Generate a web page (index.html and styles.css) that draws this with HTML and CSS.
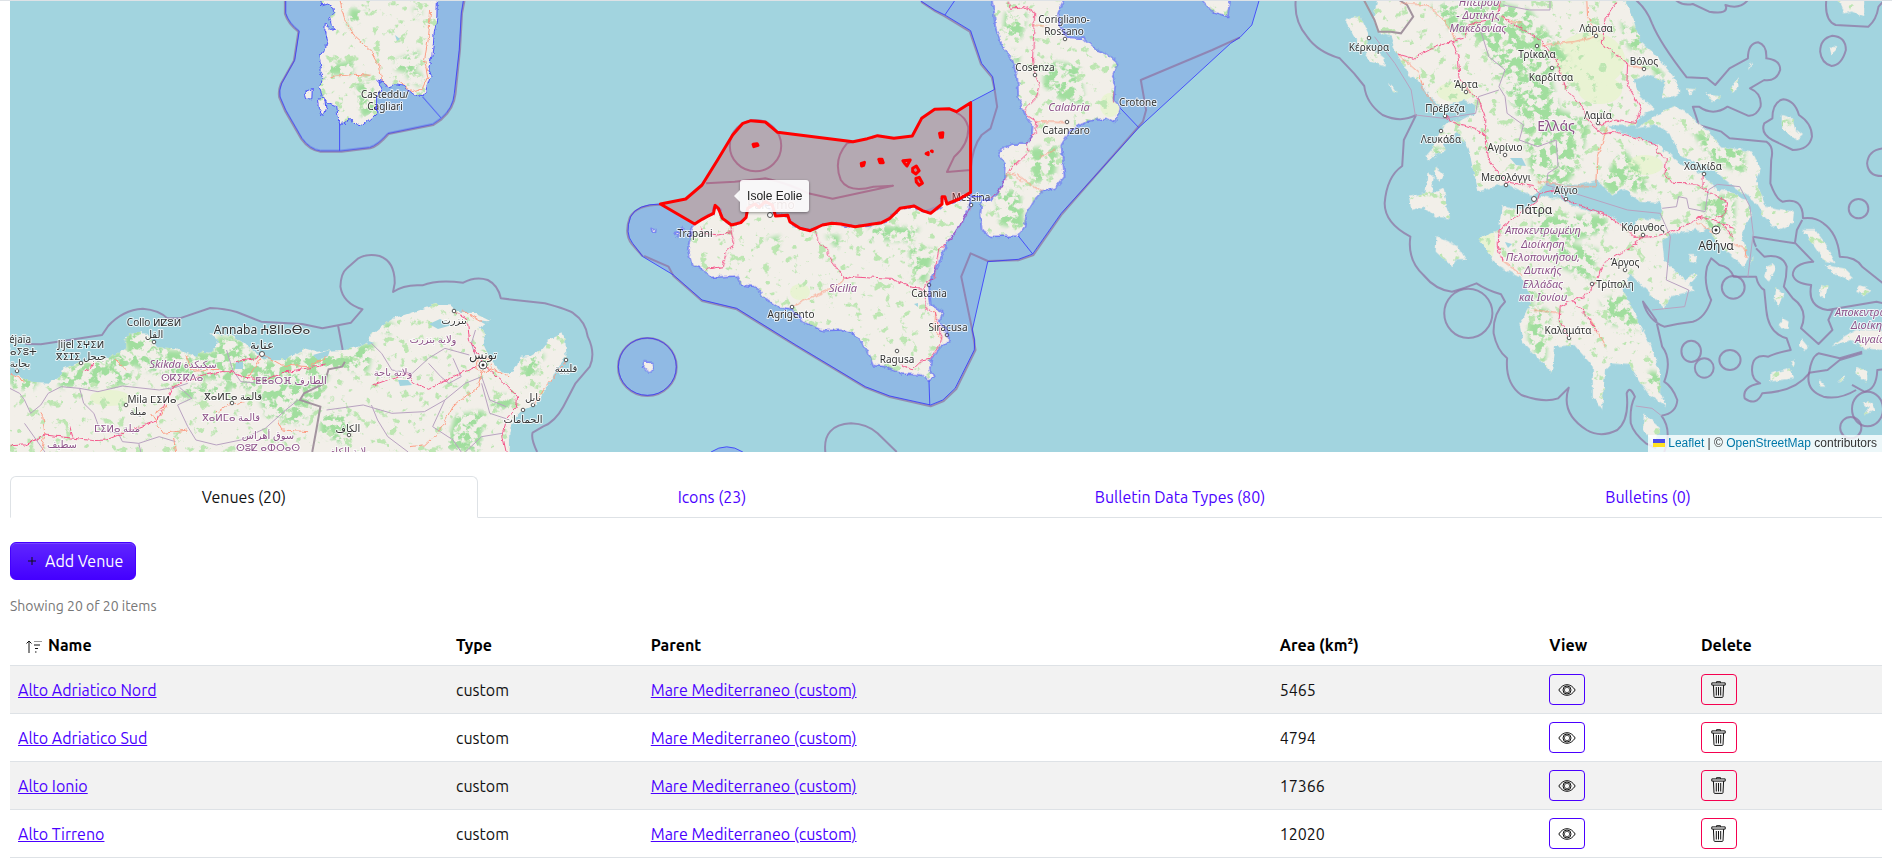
FILE: index.html
```html
<!DOCTYPE html>
<html lang="en">
<head>
<meta charset="utf-8">
<meta name="viewport" content="width=device-width, initial-scale=1">
<title>Venues</title>
<link rel="stylesheet" href="styles.css">
</head>
<body>
<svg class="sprite" aria-hidden="true">
  <symbol id="i-eye" viewBox="0 0 18 12"><path d="M.8 6C3 2.600 5.800.7 9 .7S15 2.600 17.200 6C15 9.400 12.200 11.300 9 11.300S3 9.400.8 6z"/><circle cx="9" cy="6" r="4"/><circle cx="9" cy="6" r="2.700" stroke-width=".7"/></symbol>
  <symbol id="i-trash" viewBox="0 0 15 17"><path d="M5.500 1.800V.7h4v1.100M.8 1.900h13.400v2.200H.8zM2.400 4.100l.6 11.600q.1.700.8.700h7.400q.7 0 .8-.7l.6-11.600M5.300 6v8.500M7.500 6v8.500M9.700 6v8.500"/></symbol>
  <symbol id="i-sort" viewBox="0 0 16 13"><path d="M3 13V1M.5 3.500L3 1l2.500 2.500"/><path class="faint" d="M8 1.500h8"/><path d="M8 5h6M9 8.500h3M9 12h1.500"/></symbol>
</svg>

<main class="page">
  <section class="map" aria-label="Map">
    <svg class="map-canvas" viewBox="10 1 1872 451" preserveAspectRatio="xMidYMid slice">
      <defs>
        <filter id="rough" filterUnits="userSpaceOnUse" x="0" y="0" width="1892" height="460" color-interpolation-filters="sRGB">
          <feTurbulence type="fractalNoise" baseFrequency=".16" numOctaves="3" seed="4" result="n"/>
          <feDisplacementMap in="SourceGraphic" in2="n" scale="5" xChannelSelector="R" yChannelSelector="G"/>
        </filter>
        <filter id="woods" filterUnits="userSpaceOnUse" x="0" y="0" width="1892" height="460" color-interpolation-filters="sRGB">
          <feTurbulence type="fractalNoise" baseFrequency=".12" numOctaves="4" seed="11"/>
          <feColorMatrix values="0 0 0 0 .63  0 0 0 0 .87  0 0 0 0 .62  9 0 0 0 -4.200" result="g"/>
          <feGaussianBlur in="SourceGraphic" stdDeviation="2" result="s"/>
          <feComposite in="g" in2="s" operator="in"/>
        </filter>
        <filter id="scrub" filterUnits="userSpaceOnUse" x="0" y="0" width="1892" height="460" color-interpolation-filters="sRGB">
          <feTurbulence type="fractalNoise" baseFrequency=".11" numOctaves="4" seed="23"/>
          <feColorMatrix values="0 0 0 0 .74  0 0 0 0 .90  0 0 0 0 .70  0 10 0 0 -6.200" result="g"/>
          <feComposite in="g" in2="SourceGraphic" operator="in"/>
        </filter>

        <g id="italy">
          <g transform="scale(.40816 .33333)">
            <path class="k" d="M784 -20L788 18 803 12 818 22 820 38 808 52 812 75 822 86 808 88 797 66 796 90 802 120 798 145 784 170 788 195 781 210 793 235 782 262 790 290 805 310 825 320 828 350 836 375 848 365 858 355 870 370 888 376 905 358 925 335 925 290 935 265 925 240 940 245 950 262 965 254 990 258 1010 280 1020 288 1040 290 1046 260 1056 225 1050 205 1058 170 1062 130 1064 95 1070 60 1072 -20ZM747 275L765 266 764 296 752 298ZM778 298L796 294 798 322 792 346 780 325Z"/>
          </g>
          <g transform="translate(600 0) scale(.40816 .33333)">
            <path class="k" d="M957 -20L965 30 968 80 985 140 1008 175 1022 230 1025 290 1042 345 1060 375 1058 410 1045 432 1010 432 975 455 978 468 992 490 990 540 972 585 955 600 935 600 932 640 935 690 957 709 1025 708 1040 680 1045 640 1065 600 1085 575 1115 565 1138 530 1130 435 1150 395 1190 365 1240 355 1258 368 1272 345 1275 320 1258 300 1262 255 1256 230 1268 190 1240 160 1215 150 1185 115 1145 112 1125 70 1122 40 1145 -20ZM1460 -20L1500 35 1538 50 1546 -20Z"/>
            <path class="k" d="M232 672L250 658 262 650 278 640 282 616 292 630 300 655 322 675 345 668 358 650 360 625 385 610 410 620 430 640 460 648 465 668 490 685 515 692 545 675 575 670 625 680 690 670 710 655 735 625 770 618 790 635 810 640 835 620 838 590 850 610 880 600 910 580 905 620 890 660 850 730 830 790 812 830 806 860 810 915 840 935 832 965 850 1000 858 1022 835 1040 812 1075 808 1105 818 1135 805 1142 790 1125 740 1122 700 1100 670 1097 655 1050 625 1005 590 990 545 992 505 970 470 930 440 925 400 890 380 860 345 855 335 828 270 832 250 805 225 795 215 750 222 700ZM108 1085L128 1088 130 1110 118 1116 106 1100ZM126 686L136 686 136 700 128 698ZM180 702L192 698 190 712ZM195 682L204 680 204 690Z"/>
          </g>
        </g>
        <g id="abroad">
          <g transform="scale(.40816 .33333)">
            <path d="M-10 1118L42 1128 75 1145 120 1148 150 1125 155 1105 190 1088 230 1080 260 1072 285 1062 310 1045 305 1020 320 1002 345 997 358 998 372 1020 385 1042 430 1045 455 1058 480 1068 495 1055 515 1058 530 1040 535 1020 515 1000 560 1005 590 1020 620 1055 650 1078 700 1078 745 1045 775 1055 800 1052 840 1050 895 1030 910 1005 940 975 965 955 990 945 1040 925 1070 912 1100 912 1112 925 1130 940 1160 938 1200 962 1175 980 1188 1000 1185 1035 1200 1075 1230 1118 1255 1115 1270 1095 1275 1070 1300 1068 1325 1050 1345 1020 1378 1000 1385 1025 1388 1070 1360 1110 1340 1165 1310 1215 1280 1230 1255 1260 1248 1300 1245 1390 -10 1390Z"/>
          </g>
          <g transform="translate(1252 0) scale(.40816 .33333)">
            <path d="M310 -20L298 50 310 95 340 110 350 150 385 225 415 250 435 290 470 320 490 310 520 300 548 315 545 345 500 360 475 365 455 410 435 470 500 395 530 440 540 500 555 575 620 550 690 590 705 568 720 550 800 555 845 540 880 585 910 565 950 605 1000 610 1005 630 1000 660 950 655 930 685 860 640 790 620 765 600 715 590 700 600 660 630 612 618 605 690 555 715 600 795 660 835 685 890 680 925 655 970 665 1030 690 1060 735 1120 740 1040 790 1035 835 1100 835 1190 858 1230 865 1110 880 1090 925 1095 970 1180 1015 1218 1000 1180 1000 1120 975 1030 945 960 910 870 925 820 1010 925 1025 890 1085 870 1050 830 1010 780 1005 720 1030 700 1080 690 1110 680 1150 740 1205 800 1215 770 1200 700 1225 640 1210 600 1170 575 1140 570 1100 520 1050 490 1000 440 960 420 890 390 870 375 940 378 950 350 985 325 950 290 935 240 970 225 1010 245 1005 295 1030 290 1050 275 1030 225 985 160 950 120 935 60 905 -20Z"/>
            <path d="M940 385L1000 340 1035 318 1060 335 1110 385 1150 440 1225 455 1245 500 1235 545 1260 620 1328 635 1325 670 1290 690 1255 650 1230 600 1180 560 1120 500 1050 470 1025 400 990 375Z"/>
            <path d="M228 60L265 48 285 100 280 130 325 175 325 200 290 185 250 110ZM430 520L445 530 440 580 470 565 485 655 450 650 420 620 390 630 385 590 425 580ZM452 708L505 740 525 780 500 780 490 800 450 755ZM425 470L460 420 475 450 430 480ZM335 245L345 260 355 278 345 272ZM450 500L470 520 460 545 448 530ZM960 1240L1000 1285 985 1330 958 1290ZM1080 820L1090 830 1070 855 1055 845ZM1072 765L1090 765 1088 790 1072 785ZM1090 675L1118 680 1105 695 1090 692Z"/>
            <path d="M1430 -20L1450 40 1470 35 1500 52 1500 -20ZM1415 140L1432 142 1420 165ZM1298 345L1325 355 1330 385 1350 405 1335 420 1310 400 1298 375ZM1065 265L1085 268 1075 285ZM1110 275L1125 285 1150 290 1130 308ZM1170 270L1190 232 1192 260 1180 280ZM1215 210L1222 185 1225 195ZM1350 690L1380 690 1405 730 1430 790 1400 780ZM1405 795L1450 805 1475 835 1460 842 1425 820ZM1260 800L1280 792 1285 805 1265 845 1255 830ZM1285 865L1302 880 1290 920 1280 900ZM1300 955L1315 965 1312 985 1290 980ZM1345 1015L1362 1040 1352 1055 1342 1035ZM1395 855L1410 860 1405 895 1390 885ZM1490 855L1520 870 1500 885 1480 875ZM1270 1120L1320 1105 1325 1135 1270 1145ZM1320 1085L1330 1082 1328 1100ZM1480 1100L1505 1115 1505 1145 1482 1125ZM1435 1145L1455 1125 1450 1140ZM1390 1140L1408 1160 1395 1160ZM1495 1205L1520 1210 1525 1230 1500 1245 1512 1225ZM1420 1040L1450 1010 1480 990 1546 990 1546 1050 1500 1045 1470 1020 1440 1030ZM1220 795L1230 770 1228 780Z"/>
          </g>
        </g>
        <mask id="on-land" maskUnits="userSpaceOnUse" x="0" y="0" width="1892" height="460">
          <g fill="#fff" filter="url(#rough)"><use href="#italy"/><use href="#abroad"/></g>
        </mask>
      </defs>

      <rect class="sea" x="0" y="0" width="1892" height="460"/>

      <g class="zone">
        <path transform="scale(.40816 .33333)" d="M700 -20V40Q708 70 733 93L722 180 690 250Q683 270 686 290L700 330 740 415Q760 448 785 452L835 452 905 442Q925 435 950 400L1060 372 1080 355Q1110 325 1113 280L1125 150 1130 40 1138 -20Z"/>
        <g transform="translate(600 0) scale(.40816 .33333)">
          <path d="M760 -20L785 2 820 30 845 45 908 92 935 190 962 230 967 268 908 306 908 580 600 720 300 700 232 672 148 612Q90 612 75 650 60 700 80 730L105 770 180 825 250 900 335 925 480 1035 650 1160 710 1188 810 1215 840 1200 870 1165 917 1050 918 1020 912 990 950 785 1025 778 1060 762 1130 640 1320 383 1545 130 1568 112 1597 75 1620 -20Z"/>
          <ellipse cx="116" cy="1100" rx="71" ry="86"/>
          <path d="M272 1356Q310 1325 350 1356Z"/>
        </g>
      </g>

      <g class="border">
        <path transform="scale(.40816 .33333)" d="M62 1032L100 1033 250 1005 265 978Q300 930 350 926 390 930 410 955L440 955 515 924Q550 925 580 936L640 965 740 972 790 985 860 968 888 928Q840 910 834 860 835 820 850 805L878 775Q900 760 930 768 968 785 967 850L963 876Q990 852 1035 856 1070 838 1135 848 1165 828 1195 840 1220 855 1227 895L1335 910Q1395 930 1405 940 1435 965 1440 1010 1460 1060 1445 1100L1410 1150 1380 1220Q1360 1265 1330 1280L1305 1298Q1300 1315 1316 1356M828 975L845 1085M698 -10L698 42Q706 72 731 95L720 182 688 252Q681 272 684 292L698 332 738 417Q758 451 785 455L837 455 907 445Q927 438 952 402L1062 375 1082 358Q1112 327 1116 282L1127 150 1132 40 1140 -10"/>
        <g transform="translate(600 0) scale(.40816 .33333)">
          <path d="M787 6L822 34 845 49 906 95 933 192 960 232 967 270 973 320 957 385 935 405Q912 440 908 510L850 516 868 470Q905 430 902 380 895 350 873 338M260 550L330 545 405 535Q460 550 510 580L570 596 718 557 670 560Q610 580 590 540 570 480 605 430L625 425M108 768L168 800 180 828 250 903 335 928 480 1038 650 1163 710 1191 810 1219 842 1203 873 1167 920 1050 912 990 885 830 908 760 950 783 1025 781 1062 765 1132 642 1330 365 1338 330 1325 240 1500 150 1568 112"/>
          <ellipse cx="381" cy="437" rx="63" ry="77"/>
          <ellipse cx="116" cy="1101" rx="72" ry="87"/>
          <path d="M552 1356Q545 1275 615 1270 655 1272 680 1300L727 1356M148 614Q90 614 73 652 58 702 78 732L105 770"/>
        </g>
        <g transform="translate(1252 0) scale(.40816 .33333)">
          <path d="M108 -10Q100 60 135 110 160 155 215 175L250 220 275 258Q280 310 320 345 365 370 402 345L372 420 368 498Q330 530 325 610 325 670 388 710 380 780 420 825 450 870 490 875 520 865 550 850 575 870 610 883L620 905Q590 940 592 1000 600 1050 625 1075 620 1150 660 1185 715 1210 750 1195L776 1163Q755 1240 820 1290 855 1315 895 1290 925 1260 918 1180 925 1155 938 1190 925 1220 928 1270 935 1300 965 1330L990 1345M1003 1247Q1040 1240 1042 1200 1030 1160 1010 1145 1030 1080 1005 1040L990 960 958 905Q970 960 1010 980 1045 970 1080 965 1110 955 1125 900 1105 850 1115 800L1125 775 1145 795Q1170 800 1180 830L1235 830Q1240 860 1255 870L1260 930Q1265 1000 1310 1015L1320 1050Q1280 1060 1265 1070 1225 1060 1225 1110 1225 1140 1245 1150 1200 1160 1207 1195 1235 1220 1250 1180 1330 1175 1365 1120 1370 1070 1388 1060L1440 1075 1495 1055M1003 1247Q1030 1290 1010 1356"/>
          <path d="M930 -10Q965 20 980 70 1000 130 1065 232L1115 235 1135 255 1170 205 1215 175Q1215 130 1240 127 1262 135 1260 175 1295 180 1294 210 1285 245 1255 240L1220 265Q1250 280 1246 320 1235 350 1215 347L1165 320Q1130 350 1095 320L1080 320 1095 375 1150 395 1170 415 1260 425Q1280 440 1272 480L1270 550Q1285 600 1300 605 1350 590 1350 655 1380 650 1400 670 1435 700 1440 770 1480 770 1495 800L1546 850M1227 710L1330 730 1335 690 1348 660M1235 740Q1230 730 1227 710M1235 745L1255 770Q1300 760 1310 800 1310 830 1303 860L1325 895Q1365 930 1345 985L1388 1032 1422 990 1412 960 1425 925M1330 728L1375 785Q1325 790 1325 825 1330 850 1370 855 1360 920 1410 930L1530 905 1546 910M1480 1170Q1440 1200 1400 1190 1355 1170 1365 1118L1410 1110 1440 1080 1495 1060M1470 1155L1500 1175Q1530 1170 1532 1110L1546 1108"/>
          <path d="M1030 -10Q1050 20 1080 12L1120 35Q1170 45 1160 15 1195 30 1215 0M1408 -10Q1400 60 1430 75L1510 80Q1530 60 1535 20L1546 5"/>
          <path d="M1422 107Q1455 110 1455 150 1445 195 1420 198 1395 190 1392 155 1392 115 1422 107ZM1302 298Q1330 302 1340 345 1372 370 1372 410 1365 450 1325 450L1275 420Q1245 400 1255 370L1275 355Q1275 305 1302 298ZM1546 445Q1510 450 1507 490 1510 530 1546 528"/>
          <ellipse cx="530" cy="940" rx="59" ry="74"/><ellipse cx="1179" cy="862" rx="28" ry="34"/><ellipse cx="1076" cy="1054" rx="24" ry="32"/><ellipse cx="1108" cy="1104" rx="23" ry="29"/><ellipse cx="1171" cy="1080" rx="26" ry="30"/><ellipse cx="1486" cy="626" rx="24" ry="29"/><ellipse cx="1508" cy="1227" rx="38" ry="52"/><ellipse cx="1467" cy="1283" rx="26" ry="32"/>
        </g>
      </g>

      <g class="land" filter="url(#rough)"><use href="#italy"/><use href="#abroad"/></g>

      <g mask="url(#on-land)">
        <g class="field">
          <ellipse cx="1590" cy="60" rx="35" ry="28"/><ellipse cx="1600" cy="90" rx="22" ry="14"/><ellipse cx="1455" cy="92" rx="18" ry="10"/><ellipse cx="1645" cy="165" rx="18" ry="10"/><ellipse cx="1487" cy="242" rx="8" ry="20"/><ellipse cx="800" cy="292" rx="10" ry="8"/><ellipse cx="110" cy="398" rx="20" ry="8"/><ellipse cx="1110" cy="105" rx="10" ry="12"/>
        </g>
        <g filter="url(#scrub)"><rect width="1892" height="460"/></g>
        <g filter="url(#woods)">
          <path d="M123 332L150 332 165 350 215 352 218 336 240 340 262 362 330 350 375 342 368 372 330 370 322 400 290 402 255 392 215 380 150 372 130 365ZM55 372L125 350 135 385 60 388Z"/>
          <path d="M10 372L40 380 30 392 10 385ZM258 395L320 400 300 425 265 415ZM320 410L350 412 345 445 320 435ZM385 320L395 325 390 335 382 332ZM530 350L545 355 530 385 522 375ZM455 415L485 410 480 452 445 450ZM490 395L515 395 510 410 492 408ZM180 385L235 385 225 395 180 400Z"/>
          <path d="M325 65L355 60 352 75 328 75ZM355 85L372 80 378 112 362 118ZM350 8L365 10 355 30 348 25ZM395 60L420 50 415 75 395 70ZM412 8L422 8 420 20ZM405 75L422 72 420 88Z"/>
          <path d="M1005 12L1028 12 1022 38 1002 36ZM1045 60L1080 65 1085 105 1060 100 1043 85ZM1030 148L1060 145 1055 175 1035 185 1030 170ZM995 190L1020 190 1025 230 1000 225ZM1010 50L1020 52 1018 70ZM870 225L920 228 910 242 870 240ZM908 245L935 250 925 285 912 275ZM825 235L840 235 838 250ZM765 240L780 235 778 248Z"/>
          <path d="M1430 5L1500 0 1510 30 1545 55 1560 110 1590 120 1580 165 1555 200 1530 170 1520 120 1500 80 1480 40 1450 30ZM1490 0L1530 10 1570 60 1550 75 1510 60ZM1620 20L1640 30 1645 55 1628 48ZM1535 215L1605 215 1610 230 1560 245 1530 235ZM1700 195L1735 195 1735 230 1705 230ZM1690 128L1745 150 1745 175 1710 160ZM1600 300L1635 290 1640 330 1610 325ZM1530 305L1550 310 1545 370 1528 340ZM1560 240L1600 250 1590 280 1555 265ZM1650 60L1665 75 1660 90ZM1600 180L1625 150 1640 170 1650 190 1610 195ZM1650 370L1665 375 1660 395 1645 385ZM1510 290L1540 280 1530 310ZM1775 120L1790 120 1790 130 1778 130ZM1700 85L1740 80 1735 98 1705 98ZM1430 145L1445 150 1440 165Z"/>
        </g>
        <g class="lake">
          <path d="M429 324L440 319 452 325 438 329ZM236 362L243 362 243 369 235 369ZM1510 158L1522 158 1526 166 1516 165ZM1443 108L1460 104 1475 112 1458 122 1446 117ZM1630 58L1636 62 1632 66ZM1505 242L1512 244 1508 248ZM395 35L400 39 397 41ZM313 355L330 350 328 356 318 360ZM398 380L408 380 412 385 400 386ZM366 340L374 343 368 345ZM478 320L492 322 488 326ZM914 304L918 303 918 307Z"/>
        </g>
      </g>

      <g class="province">
        <g transform="scale(.40816 .33333)">
          <path d="M24 1165L48 1180 60 1200 75 1240 100 1215 118 1180 150 1160 195 1165 240 1175 300 1158 390 1170 430 1162 460 1150M195 1165L205 1210 230 1240 245 1290 290 1300 300 1325 340 1330 390 1310 430 1325M440 1162L470 1195 435 1215 460 1280 480 1320 530 1335 590 1320 650 1285 700 1230 730 1200M555 1050L570 1110 590 1145 640 1150M910 1030L935 1060 960 1110 1010 1120 1050 1075 1090 1045 1120 1055 1150 1065M1110 1075L1130 1130 1100 1150 1080 1130 1050 1090M1165 990L1155 1030 1165 1070M800 1230L890 1215 960 1240 1040 1235 1090 1200 1140 1150 1180 1130M910 1215L925 1260 950 1310 1000 1356M1180 1130L1200 1200 1240 1220M1090 1200L1060 1280 1110 1320 1130 1356M1140 1356L1180 1310 1230 1300M340 1330L345 1356M60 1270L110 1356M1180 1150L1200 1240 1250 1260"/>
          <path class="state" d="M845 1085L838 1100 805 1108 795 1150 745 1180 735 1200 785 1220 775 1290 765 1356"/>
        </g>
        <g transform="translate(1252 0) scale(.40816 .33333)">
          <path d="M560 90L580 170 620 210 605 260 620 290 625 340 665 375 655 420 700 440 745 420 750 500 725 520 722 555 790 580 920 630 1000 640M605 270L555 290 548 340 470 355 400 345 390 270 350 190 300 110M615 15L680 30 730 30V0M1005 625L1040 620 1045 590 1065 595 1070 625 1110 635 1118 570 1140 553 1195 560 1220 620 1228 700 1215 830M1000 640L1025 710 1015 840 1070 870 1060 920 980 930M940 1218L980 1225 1003 1247"/>
          <path class="state" d="M270 -10L300 60 310 95 340 95 365 100 395 50 380 15 360 0"/>
        </g>
      </g>

      <g class="road minor" filter="url(#rough)">
        <g transform="scale(.40816 .33333)">
          <path d="M833 0Q840 60 865 105L910 155 930 200 935 240 950 255M810 230L870 223 910 226M1055 30L1050 110 1040 180 1048 230 1035 265 1010 275 978 243M385 1262L370 1240 400 1300 460 1290M385 1262L410 1215 380 1240M110 1305L105 1250 100 1240M110 1305L100 1356M430 1356L425 1310M642 1062L610 1130M642 1062L690 1095 760 1100 800 1070M530 1240L560 1215 600 1205M1183 1110L1170 1160 1110 1220 1080 1290 1040 1335 1005 1340M1388 1085L1350 1140 1305 1218M1190 1100L1250 1130M1130 930L1180 965M455 1065L470 1110 540 1108M280 1075L310 1110M24 1120L60 1145M680 1265L690 1290 755 1295"/>
          <path d="M1170 1075L1195 1075 1205 1100 1190 1120 1165 1105Z"/>
        </g>
        <g transform="translate(600 0) scale(.40816 .33333)">
          <path d="M470 920L510 895 560 870 598 838M1060 75L1100 80M1020 520L1060 560 1085 575M1070 365L1140 368M1080 470L1115 450M820 930L818 980 838 1020M1258 275V305M1000 515L1035 545"/>
        </g>
        <g transform="translate(1252 0) scale(.40816 .33333)">
          <path d="M365 10L430 15 470 60 500 120M610 55L660 70M710 135L790 125 840 110M820 0L822 50 845 110M357 162L410 220 420 270 460 330M870 380L858 430 845 470 842 560 780 560 700 545M612 780L665 830M685 930L755 938M830 960L865 1040M1090 665L1130 700M1175 730L1212 750 1210 775M920 195L960 205"/>
        </g>
      </g>
      <g class="road" filter="url(#rough)">
        <g transform="scale(.40816 .33333)">
          <path d="M24 1337L60 1335 110 1305 230 1322 260 1320 290 1305 385 1262 400 1220 420 1165 440 1150 500 1125 560 1112 600 1135 650 1140 700 1115 750 1105 800 1095M170 1275L178 1310M205 1112L222 1105 228 1090M1112 935L1145 960 1150 1020 1183 1092 1235 1150 1268 1190 1265 1225 1240 1260 1232 1310 1240 1356M1183 1092L1100 1135 1050 1168 1010 1145 995 1120 960 1135 915 1155M575 1085L620 1078 642 1062"/>
        </g>
        <g transform="translate(600 0) scale(.40816 .33333)">
          <path d="M1000 5L1005 25 1040 20 1065 40 1060 180 1065 220 1078 260 1070 290 1042 325 1045 345 1070 365 1068 395 1045 430 1052 455 1000 515 975 580 955 595M245 680L255 700 290 705 322 695 330 735 310 755 300 800 262 808M322 695V672M525 692L540 735 558 745 560 770 575 795 598 838 625 828 710 835 740 850 765 862 795 865 800 925 820 940 838 1010 835 1030 810 1075 790 1080 765 1110 740 1095M795 865L800 845 818 835 830 750 850 730 880 680 908 620M515 692L545 675"/>
        </g>
        <g transform="translate(1252 0) scale(.40816 .33333)">
          <path d="M610 -10L600 55 560 65 530 75 520 115 490 125 450 140 395 175 357 162M610 50L680 100 710 125 745 180 770 270 810 320 815 350 858 402 890 395 985 430 995 460 1015 475 1012 520 1030 550 1090 552 1105 565 1140 590 1165 605 1160 640 1135 655M893 5L865 55 858 130 920 190 918 250 953 325 940 370 890 360 850 375M490 125L505 170 510 240 555 300 570 345 570 410 580 480 620 545 690 560 705 580 700 600 605 690 603 735 612 780M475 350L500 370 550 385 570 410M705 580L740 570 770 600 860 640 910 680 935 712 985 710 1040 690 1100 650 1150 670 1165 690 1180 715M958 712L930 740 860 790 845 840 815 890 785 900 755 920 752 960 775 1010M785 900L820 950 848 995M1105 525V560M1150 670L1180 685"/>
        </g>
      </g>

      <g class="town">
        <circle cx="154" cy="342" r="1.800"/><circle cx="81" cy="363" r="1.800"/><circle cx="17" cy="371" r="1.800"/><circle cx="262" cy="354" r="2.500"/><circle cx="126" cy="405" r="1.800"/><circle cx="232" cy="403" r="1.800"/><circle cx="454" cy="311" r="1.800"/><circle cx="566" cy="360" r="1.800"/><circle cx="533" cy="405" r="1.800"/><circle cx="523" cy="410" r="1.800"/><circle cx="349" cy="435" r="1.800"/><circle cx="483" cy="365" r="4"/><circle class="dot" cx="483" cy="365" r="1.500"/>
        <circle cx="1065" cy="39" r="1.800"/><circle cx="1035" cy="75" r="1.800"/><circle cx="1067" cy="122" r="1.800"/><circle cx="792" cy="307" r="1.800"/><circle cx="929" cy="285" r="1.800"/><circle cx="897" cy="351" r="1.800"/><circle cx="947" cy="335" r="1.800"/><circle cx="770" cy="215" r="2.500"/><circle cx="971" cy="205" r="1.800"/>
        <circle cx="1369" cy="38" r="1.800"/><circle cx="1596" cy="36" r="1.800"/><circle cx="1537" cy="46" r="1.800"/><circle cx="1552" cy="68" r="1.800"/><circle cx="1644" cy="69" r="1.800"/><circle cx="1466" cy="92" r="1.800"/><circle cx="1445" cy="116" r="1.800"/><circle cx="1598" cy="123" r="1.800"/><circle cx="1441" cy="131" r="1.800"/><circle cx="1505" cy="155" r="1.800"/><circle cx="1704" cy="174" r="1.800"/><circle cx="1506" cy="185" r="1.800"/><circle cx="1566" cy="199" r="1.800"/><circle cx="1534" cy="199" r="2.500"/><circle cx="1643" cy="235" r="1.800"/><circle cx="1625" cy="270" r="1.800"/><circle cx="1592" cy="284" r="1.800"/><circle cx="1569" cy="338" r="1.800"/><circle cx="1716" cy="230" r="4"/><circle class="dot" cx="1716" cy="230" r="1.500"/>
      </g>

      <g class="label">
        <text x="385" y="98">Casteddu/</text><text x="385" y="110">Cagliari</text>
        <text x="154" y="326">Collo ⵍⵇⵓⵍ</text><text x="154" y="338">القل</text>
        <text x="81" y="348">Jijel ⵉⵖⵉⵍ</text><text x="81" y="360">ⴳⵉⵊⵉ جيجل</text>
        <text x="20" y="343">éjaïa</text><text x="20" y="355">ⴳⴰⵢⵓⵜ</text><text x="20" y="367">بجاية</text>
        <text class="city" x="262" y="334">Annaba ⵄⵓⵏⵏⴰⴱⴰ</text><text class="city" x="262" y="349">عنابة</text>
        <text x="152" y="403">Mila ⵎⵉⵍⴰ</text><text x="138" y="415">ميلة</text>
        <text x="233" y="400">ⴳⴰⵍⵎⴰ قالمة</text>
        <text x="454" y="324">بنزرت</text><text class="city" x="483" y="359">تونس</text><text x="566" y="372">قليبية</text><text x="533" y="401">نابل</text><text x="523" y="423">الحمامات</text><text x="348" y="432">الكاف</text>
        <text x="1064" y="23">Corigliano-</text><text x="1064" y="35">Rossano</text><text x="1035" y="71">Cosenza</text><text x="1138" y="106">Crotone</text><text x="1066" y="134">Catanzaro</text><text x="971" y="201">Messina</text><text x="695" y="237">Trapani</text><text x="929" y="297">Catania</text><text x="791" y="318">Agrigento</text><text x="948" y="331">Siracusa</text><text x="897" y="363">Ragusa</text><text class="city" x="771" y="209">Palermo</text>
        <text x="1369" y="51">Κέρκυρα</text><text x="1596" y="32">Λάρισα</text><text x="1537" y="58">Τρίκαλα</text><text x="1551" y="81">Καρδίτσα</text><text x="1644" y="65">Βόλος</text><text x="1466" y="88">Άρτα</text><text x="1445" y="112">Πρέβεζα</text><text x="1598" y="119">Λαμία</text><text x="1441" y="143">Λευκάδα</text><text x="1505" y="151">Αγρίνιο</text><text x="1703" y="170">Χαλκίδα</text><text x="1506" y="181">Μεσολόγγι</text><text x="1566" y="194">Αίγιο</text><text class="city" x="1534" y="214">Πάτρα</text><text x="1643" y="231">Κόρινθος</text><text class="city" x="1716" y="250">Αθήνα</text><text x="1625" y="266">Άργος</text><text x="1615" y="288">Τρίπολη</text><text x="1568" y="334">Καλαμάτα</text>
      </g>
      <g class="label region">
        <text x="183" y="368"><tspan class="slant">Skikda</tspan> سكيكدة</text><text x="182" y="381">ⵙⴽⵉⴽⴷⴰ</text><text x="291" y="384">ⵟⵟⴰⵔⴼ الطارف</text><text x="231" y="421">ⴳⴰⵍⵎⴰ قالمة</text><text x="268" y="439">سوق أهراس</text><text x="268" y="451">ⵙⵓⵇ ⴰⵀⵔⴰⵙ</text><text x="117" y="432">ⵎⵉⵍⴰ ميلة</text><text x="62" y="448">سطيف</text><text x="433" y="343">ولاية بنزرت</text><text x="393" y="376">ولاية باجة</text><text x="348" y="455">ولاية الكاف</text>
        <text class="country" x="1556" y="131">Ελλάς</text>
        <g class="slant">
          <text x="1069" y="111">Calabria</text><text x="843" y="292">Sicilia</text>
          <text x="1479" y="6">Ηπείρου</text><text x="1478" y="19">- Δυτικής</text><text x="1478" y="32">Μακεδονίας</text>
          <text x="1543" y="234">Αποκεντρωμένη</text><text x="1543" y="248">Διοίκηση</text><text x="1543" y="261">Πελοποννήσου,</text><text x="1543" y="274">Δυτικής</text><text x="1543" y="288">Ελλάδας</text><text x="1543" y="301">και Ιονίου</text>
          <g class="cut"><text x="1835" y="316">Αποκεντρω</text><text x="1851" y="329">Διοίκη</text><text x="1855" y="343">Αιγαίο</text></g>
        </g>
      </g>

      <g class="coast" filter="url(#rough)"><use href="#italy"/></g>
      <g class="coast">
        <path transform="scale(.40816 .33333)" d="M700 -20V40Q708 70 733 93L722 180 690 250Q683 270 686 290L700 330 740 415Q760 448 785 452L835 452 905 442Q925 435 950 400L1060 372 1080 355Q1110 325 1113 280L1125 150 1130 40 1138 -20M832 372V452M1035 290L1080 353M922 240L930 250 936 244"/>
        <g transform="translate(600 0) scale(.40816 .33333)">
          <path d="M760 -20L785 2 820 30 845 45 908 92 935 190 962 230 967 268 908 306M870 0L845 45M148 612Q90 612 75 650 60 700 80 730L105 770 180 825 250 900 335 925 480 1035 650 1160 710 1188 810 1215 840 1200 870 1165 917 1050 918 1020 912 990 950 785 1025 778 1060 762 1130 640 1320 383 1545 130 1568 112 1597 75 1620 -20M806 1142L808 1215M1275 325L1320 383M1025 708L1060 762M910 590H935"/>
          <ellipse cx="116" cy="1100" rx="71" ry="86"/>
          <path d="M272 1356Q310 1325 350 1356"/>
        </g>
      </g>

      <g class="selected" transform="translate(600 0) scale(.40816 .33333)">
        <path d="M148 612L210 597 250 555 288 480 325 405 350 370 370 362 405 366 435 397 620 425 655 416 680 407 720 415 765 408 788 355 820 328 855 326 873 335 908 308 908 577 880 597 850 612 845 590 838 590 838 612 810 640 790 632 770 618 735 625 710 655 690 668 625 680 590 672 568 670 545 675 515 692 490 685 465 665 460 646 430 648 422 615 405 605 390 622 380 612 362 625 358 652 345 668 322 675 300 655 290 625 282 616 278 640 262 650 250 658 232 672Z"/>
        <path d="M742 482L760 480 752 498 746 490ZM766 505L775 498 782 512 774 522 766 515ZM774 535L782 532 790 550 782 556 775 546Z"/>
        <path class="isle" d="M375 433L385 431 387 436 377 440ZM640 490L648 487 646 496 641 498ZM683 478L691 478 694 488 686 488ZM832 400L840 398 839 412 834 412ZM799 461L804 458 804 464ZM812 453L814 453 814 455Z"/>
      </g>
    </svg>
    <div class="tooltip" role="tooltip">Isole Eolie</div>
    <div class="attribution">
      <a href="#leaflet"><svg class="flag" viewBox="0 0 12 8" aria-hidden="true"><path fill="#4c4ce8" d="M0 0h12v4H0z"/><path fill="#ffe21f" d="M0 4h12v4H0z"/></svg> Leaflet</a> | © <a href="#osm">OpenStreetMap</a> contributors
    </div>
  </section>

  <nav class="tabs" role="tablist">
    <button class="tab active" type="button" role="tab" aria-selected="true">Venues (20)</button>
    <button class="tab" type="button" role="tab" aria-selected="false">Icons (23)</button>
    <button class="tab" type="button" role="tab" aria-selected="false">Bulletin Data Types (80)</button>
    <button class="tab" type="button" role="tab" aria-selected="false">Bulletins (0)</button>
  </nav>

  <button class="add" type="button"><svg class="plus" viewBox="0 0 10 10" aria-hidden="true"><path d="M5 1v8M1 5h8"/></svg>Add Venue</button>
  <p class="count">Showing 20 of 20 items</p>

  <table class="venues">
    <colgroup><col class="c-name"><col class="c-type"><col class="c-parent"><col class="c-area"><col class="c-view"><col class="c-delete"></colgroup>
    <thead>
      <tr><th class="sorted" scope="col"><svg class="sort" aria-hidden="true"><use href="#i-sort"/></svg>Name</th><th scope="col">Type</th><th scope="col">Parent</th><th scope="col">Area (km²)</th><th scope="col">View</th><th scope="col">Delete</th></tr>
    </thead>
    <tbody>
      <tr><td><a href="#nord">Alto Adriatico Nord</a></td><td>custom</td><td><a href="#mare">Mare Mediterraneo (custom)</a></td><td>5465</td>
        <td><button class="act view" type="button" aria-label="View Alto Adriatico Nord"><svg class="eye"><use href="#i-eye"/></svg></button></td><td><button class="act delete" type="button" aria-label="Delete Alto Adriatico Nord"><svg class="trash"><use href="#i-trash"/></svg></button></td></tr>
      <tr><td><a href="#sud">Alto Adriatico Sud</a></td><td>custom</td><td><a href="#mare">Mare Mediterraneo (custom)</a></td><td>4794</td>
        <td><button class="act view" type="button" aria-label="View Alto Adriatico Sud"><svg class="eye"><use href="#i-eye"/></svg></button></td><td><button class="act delete" type="button" aria-label="Delete Alto Adriatico Sud"><svg class="trash"><use href="#i-trash"/></svg></button></td></tr>
      <tr><td><a href="#ionio">Alto Ionio</a></td><td>custom</td><td><a href="#mare">Mare Mediterraneo (custom)</a></td><td>17366</td>
        <td><button class="act view" type="button" aria-label="View Alto Ionio"><svg class="eye"><use href="#i-eye"/></svg></button></td><td><button class="act delete" type="button" aria-label="Delete Alto Ionio"><svg class="trash"><use href="#i-trash"/></svg></button></td></tr>
      <tr><td><a href="#tirreno">Alto Tirreno</a></td><td>custom</td><td><a href="#mare">Mare Mediterraneo (custom)</a></td><td>12020</td>
        <td><button class="act view" type="button" aria-label="View Alto Tirreno"><svg class="eye"><use href="#i-eye"/></svg></button></td><td><button class="act delete" type="button" aria-label="Delete Alto Tirreno"><svg class="trash"><use href="#i-trash"/></svg></button></td></tr>
    </tbody>
  </table>
</main>
</body>
</html>
```
FILE: styles.css
```css
* { box-sizing: border-box; }

body {
  margin: 0;
  border-top: 1px solid #dee2e6;
  background: #fff;
  color: #111;
  font: 16px/24px Ubuntu, "Noto Sans", sans-serif;
}

.sprite { position: absolute; width: 0; height: 0; }
.page { padding: 0 10px; }

/* Map */
.map { position: relative; aspect-ratio: 1872 / 451; overflow: hidden; background: #a2d4df; }
.map-canvas { display: block; width: 100%; height: 100%; }
.map-canvas path, .map-canvas ellipse { vector-effect: non-scaling-stroke; }
.sea { fill: #a2d4df; }
.zone { fill: #90bae4; }
.land { fill: #f2efe9; }
.field { fill: #e9f3d3; }
.lake { fill: #a2d4df; }
.border { fill: none; stroke: #8f6fa0; stroke-opacity: .7; stroke-width: 2; stroke-linejoin: round; }
.province { fill: none; stroke: #b8a2c0; stroke-width: 1; }
.state { stroke-width: 2; stroke: #a3949f; }
.road { fill: none; stroke: #f4558a; stroke-width: 1; stroke-linejoin: round; }
.road.minor { stroke: #fc9d84; stroke-width: 1; }
.town { fill: #fff; stroke: #555; stroke-width: 1; }
.town .dot { fill: #333; stroke: none; }
.label {
  fill: #333;
  stroke: #fff;
  stroke-opacity: .75;
  stroke-width: 2;
  stroke-linejoin: round;
  paint-order: stroke;
  font: 10px "Noto Sans", "DejaVu Sans", sans-serif;
  text-anchor: middle;
}
.label .city { font-size: 12px; }
.label .country { font-size: 14px; }
.label.region { fill: #8d5289; }
.slant { font-size: 11px; font-style: italic; }
.cut { text-anchor: start; }
.coast { fill: none; stroke: #33f; stroke-opacity: .8; stroke-width: 1; stroke-linejoin: round; }
.selected { fill: #f00; fill-opacity: .2; stroke: #f00; stroke-width: 3; stroke-linejoin: round; }
.isle { fill-opacity: 1; }

.tooltip {
  position: absolute;
  left: 39%;
  top: 39.700%;
  padding: 7px;
  border-radius: 3px;
  background: rgba(255, 255, 255, .9);
  box-shadow: 0 1px 3px rgba(0, 0, 0, .4);
  color: #222;
  font: 12px/18px "Liberation Sans", Arial, sans-serif;
}
.tooltip::before {
  content: "";
  position: absolute;
  right: 100%;
  top: 50%;
  margin-top: -6px;
  border: 6px solid transparent;
  border-left: 0;
  border-right-color: rgba(255, 255, 255, .9);
}

.attribution {
  position: absolute;
  right: 0;
  bottom: 0;
  padding: 0 5px;
  background: rgba(255, 255, 255, .8);
  color: #333;
  font: 12px/17px "Liberation Sans", Arial, sans-serif;
}
.attribution a { color: #0078a8; text-decoration: none; }
.flag { width: 12px; height: 8px; }

/* Tabs */
.tabs { display: flex; margin-top: 24px; border-bottom: 1px solid #dee2e6; }
.tab {
  flex: 1;
  margin-bottom: -1px;
  padding: 8px 16px;
  border: 1px solid transparent;
  border-radius: 6px 6px 0 0;
  background: none;
  color: #4a00ff;
  font: inherit;
}
.tab.active { border-color: #dee2e6 #dee2e6 #fff; background: #fff; color: #111; }

.add {
  display: flex;
  align-items: center;
  margin-top: 24px;
  padding: 6px 12px;
  border: 1px solid #4400ff;
  border-radius: 6px;
  background: linear-gradient(#6026ff, #4400ff);
  box-shadow: inset 0 1px 0 rgba(255, 255, 255, .15);
  color: #fff;
  font: inherit;
}
.plus { width: 10px; height: 10px; margin: 0 8px 0 4px; fill: none; stroke: #111; }

.count { margin: 16px 0 8px; color: #777; font-size: 14px; line-height: 21px; }

/* Table */
.venues { width: 100%; border-collapse: separate; border-spacing: 0; table-layout: fixed; }
.c-name { width: 23.400%; }
.c-type { width: 10.400%; }
.c-parent { width: 33.600%; }
.c-area { width: 14.400%; }
.c-view { width: 8.100%; }
.c-delete { width: 10.100%; }
.venues th, .venues td { padding: 8px; border-bottom: 1px solid #dee2e6; text-align: left; vertical-align: middle; }
.venues th { color: #000; font-weight: 700; }
.venues .sorted { padding-left: 16px; }
.venues tbody tr:nth-child(odd) { background: #f2f2f2; }
.venues a { color: #4a00ff; }
.sort { width: 16px; height: 13px; margin-right: 6px; vertical-align: -2px; fill: none; stroke: #111; }
.faint { stroke: #999; }

.act {
  display: flex;
  align-items: center;
  justify-content: center;
  width: 36px;
  height: 31px;
  padding: 0;
  border: 1px solid #4a00ff;
  border-radius: 4px;
  background: none;
}
.act.delete { border-color: #f5004f; }
.act svg { fill: none; stroke: #111; }
.eye { width: 18px; height: 12px; }
.trash { width: 15px; height: 17px; }
```
